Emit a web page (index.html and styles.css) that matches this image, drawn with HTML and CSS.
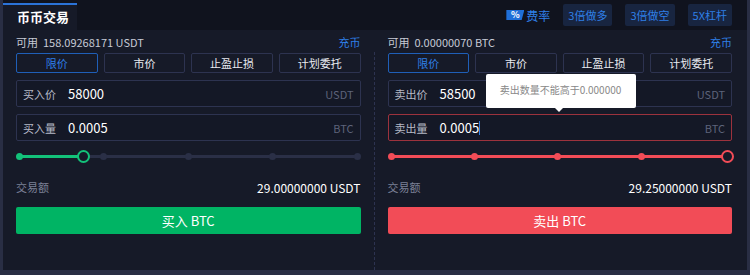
FILE: index.html
```html
<!DOCTYPE html>
<html lang="zh">
<head>
  <meta charset="UTF-8" />
  <title>币币交易</title>
  <link rel="stylesheet" href="styles.css">
</head>
<body>
  <div class="panel">
    <div class="head">
      <div class="tab">币币交易</div>
      <div class="head-right">
        <span class="rate"><span class="badge">%</span>费率</span>
        <span class="chip">3倍做多</span>
        <span class="chip">3倍做空</span>
        <span class="chip">5X杠杆</span>
      </div>
    </div>

    <div class="body">
      <div class="col buy">
        <div class="avail">
          <span>可用&nbsp; 158.09268171 USDT</span>
          <a class="deposit">充币</a>
        </div>
        <div class="types">
          <div class="type active">限价</div>
          <div class="type">市价</div>
          <div class="type">止盈止损</div>
          <div class="type">计划委托</div>
        </div>
        <div class="field">
          <span class="label">买入价</span>
          <span class="value">58000</span>
          <span class="unit">USDT</span>
        </div>
        <div class="field">
          <span class="label">买入量</span>
          <span class="value">0.0005</span>
          <span class="unit">BTC</span>
        </div>
        <div class="slider green">
          <div class="track"><div class="fill" style="width: 19.5%"></div></div>
          <div class="dots">
            <span class="dot on"></span>
            <span class="dot handle" style="left: 19.5%"></span>
            <span class="dot"></span>
            <span class="dot"></span>
            <span class="dot"></span>
            <span class="dot"></span>
          </div>
        </div>
        <div class="total">
          <span class="total-label">交易额</span>
          <span class="total-value">29.00000000 USDT</span>
        </div>
        <button class="submit">买入 BTC</button>
      </div>

      <div class="divider"></div>

      <div class="col sell">
        <div class="avail">
          <span>可用&nbsp; 0.00000070 BTC</span>
          <a class="deposit">充币</a>
        </div>
        <div class="types">
          <div class="type active">限价</div>
          <div class="type">市价</div>
          <div class="type">止盈止损</div>
          <div class="type">计划委托</div>
        </div>
        <div class="field">
          <span class="label">卖出价</span>
          <span class="value">58500</span>
          <span class="unit">USDT</span>
        </div>
        <div class="field error">
          <span class="label">卖出量</span>
          <span class="value">0.0005<i class="caret"></i></span>
          <span class="unit">BTC</span>
          <div class="tip">卖出数量不能高于0.000000</div>
        </div>
        <div class="slider red">
          <div class="track"><div class="fill" style="width: 100%"></div></div>
          <div class="dots">
            <span class="dot on"></span>
            <span class="dot on"></span>
            <span class="dot on"></span>
            <span class="dot on"></span>
            <span class="dot handle end"></span>
          </div>
        </div>
        <div class="total">
          <span class="total-label">交易额</span>
          <span class="total-value">29.25000000 USDT</span>
        </div>
        <button class="submit">卖出 BTC</button>
      </div>
    </div>
  </div>
</body>
</html>
```

FILE: styles.css
```css
body {
  margin: 0;
  background: #292e44;
  font-family: "Noto Sans CJK SC", "Noto Sans", sans-serif;
  color: #e4e6ee;
}

.panel {
  margin: 0 3px;
  height: 270px;
  background: #161a28;
  display: flex;
  flex-direction: column;
}

.head {
  height: 30px;
  background: #10131e;
  display: flex;
  justify-content: space-between;
  align-items: stretch;
}

.tab {
  margin-top: 3px;
  width: 74px;
  box-sizing: border-box;
  border-top: 2px solid #2b73d8;
  background: #161a28;
  color: #ffffff;
  font-size: 13px;
  font-weight: bold;
  padding-left: 14px;
  line-height: 23px;
}

.head-right {
  display: flex;
  align-items: center;
  gap: 13px;
  padding-right: 15px;
}

.rate {
  display: flex;
  align-items: center;
  color: #2f7fe6;
  font-size: 12px;
}

.badge {
  display: inline-block;
  width: 18px;
  height: 10px;
  line-height: 10px;
  background: #1f6fd8;
  color: #fff;
  font-size: 9px;
  font-weight: bold;
  text-align: center;
  margin-right: 2px;
  clip-path: polygon(0 0, 100% 0, 85% 100%, 0 100%);
}

.chip {
  background: #182540;
  color: #2f7fe6;
  font-size: 11px;
  height: 22px;
  line-height: 22px;
  padding: 0 5px;
  border-radius: 2px;
}

.body {
  flex: 1;
  display: flex;
  padding: 0 15px 0 13px;
}

.col {
  flex: 1;
  display: flex;
  flex-direction: column;
}

.divider {
  width: 0;
  margin: 22px 13px 0 13px;
  border-left: 1px dashed #2d3350;
}

.avail {
  display: flex;
  justify-content: space-between;
  align-items: center;
  height: 23px;
  font-size: 11px;
  color: #c7cad6;
}

.deposit {
  color: #2f7fe6;
}

.types {
  display: flex;
  gap: 6px;
}

.type {
  flex: 1;
  height: 20px;
  line-height: 18px;
  box-sizing: border-box;
  border: 1px solid #2d3350;
  border-radius: 2px;
  text-align: center;
  font-size: 11px;
  color: #e8eaf0;
}

.type.active {
  border-color: #1f5fb8;
  color: #2f7fe6;
}

.field {
  position: relative;
  display: flex;
  align-items: center;
  height: 27px;
  box-sizing: border-box;
  border: 1px solid #2d3350;
  border-radius: 2px;
  background: #141826;
  margin-top: 7px;
  padding: 0 6px;
}

.field.error {
  border-color: #9c323d;
}

.label {
  width: 45px;
  font-size: 11px;
  color: #b6bac7;
}

.value {
  flex: 1;
  font-size: 13px;
  color: #ffffff;
  display: flex;
  align-items: center;
}

.caret {
  display: inline-block;
  width: 1px;
  height: 14px;
  background: #2f7fe6;
}

.unit {
  font-size: 11px;
  color: #5d637a;
}

.tip {
  position: absolute;
  left: 97px;
  top: -41px;
  width: 150px;
  height: 34px;
  line-height: 32px;
  background: #ffffff;
  color: #888;
  font-size: 10px;
  text-align: center;
  border-radius: 2px;
  z-index: 2;
}

.tip::after {
  content: "";
  position: absolute;
  left: 69px;
  bottom: -4px;
  border: 4px solid transparent;
  border-bottom: 0;
  border-top-color: #ffffff;
}

.slider {
  position: relative;
  height: 16px;
  margin-top: 7px;
}

.track {
  position: absolute;
  left: 4px;
  right: 4px;
  top: 7px;
  height: 3px;
  background: #2a2f46;
}

.fill {
  height: 100%;
}

.dots {
  position: relative;
  display: flex;
  justify-content: space-between;
  align-items: center;
  height: 100%;
}

.dot {
  width: 7px;
  height: 7px;
  border-radius: 50%;
  background: #2a2f46;
}

.dot.handle {
  position: absolute;
  width: 13px;
  height: 13px;
  box-sizing: border-box;
  margin-left: -6px;
  background: #161a28;
  z-index: 1;
}

.dot.handle.end {
  position: static;
  margin: 0 -2px 0 0;
}

.green .fill,
.green .dot.on {
  background: #13c27a;
}

.green .dot.handle {
  border: 2px solid #13c27a;
}

.red .fill,
.red .dot.on {
  background: #f24c57;
}

.red .dot.handle {
  border: 2px solid #f24c57;
}

.total {
  display: flex;
  justify-content: space-between;
  align-items: center;
  margin-top: 12px;
  height: 22px;
}

.total-label {
  font-size: 11px;
  color: #7b8096;
}

.total-value {
  font-size: 12px;
  color: #ffffff;
}

.submit {
  margin-top: 9px;
  height: 27px;
  border: none;
  border-radius: 2px;
  color: #ffffff;
  font-family: inherit;
  font-size: 13px;
}

.buy .submit {
  background: #00b464;
}

.sell .submit {
  background: #f24c57;
}
```
